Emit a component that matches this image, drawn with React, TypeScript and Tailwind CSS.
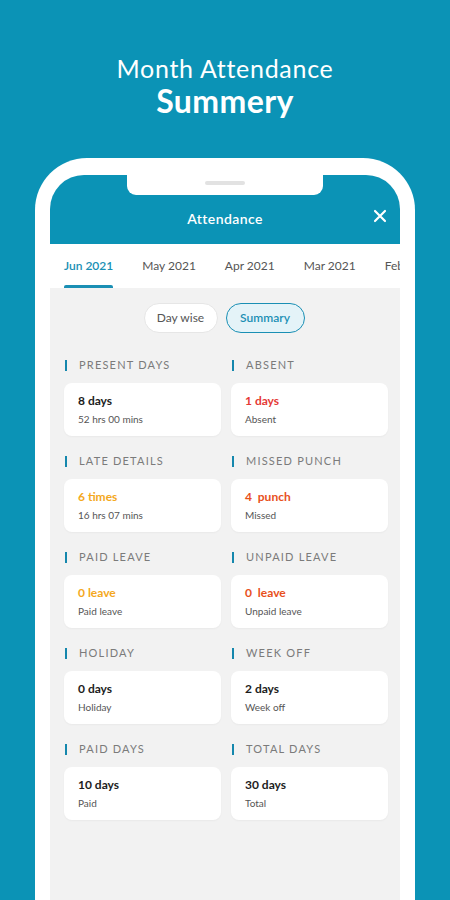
import React from "react";

const font = { fontFamily: "Lato, 'Noto Sans', sans-serif" };

type Item = {
  label: string;
  value: string;
  sub: string;
  color: string;
};

const items: Item[] = [
  { label: "PRESENT DAYS", value: "8 days", sub: "52 hrs 00 mins", color: "text-[#1c1c1c]" },
  { label: "ABSENT", value: "1 days", sub: "Absent", color: "text-[#e53935]" },
  { label: "LATE DETAILS", value: "6 times", sub: "16 hrs 07 mins", color: "text-[#f4a81d]" },
  { label: "MISSED PUNCH", value: "4  punch", sub: "Missed", color: "text-[#e8501c]" },
  { label: "PAID LEAVE", value: "0 leave", sub: "Paid leave", color: "text-[#f4a81d]" },
  { label: "UNPAID LEAVE", value: "0  leave", sub: "Unpaid leave", color: "text-[#e8501c]" },
  { label: "HOLIDAY", value: "0 days", sub: "Holiday", color: "text-[#1c1c1c]" },
  { label: "WEEK OFF", value: "2 days", sub: "Week off", color: "text-[#1c1c1c]" },
  { label: "PAID DAYS", value: "10 days", sub: "Paid", color: "text-[#1c1c1c]" },
  { label: "TOTAL DAYS", value: "30 days", sub: "Total", color: "text-[#1c1c1c]" },
];

function Cell({ item }: { item: Item }) {
  return (
    <div className="flex flex-col">
      <div className="flex h-[18px] items-center gap-[12px] pl-[1px]">
        <span className="h-[11px] w-[2px] bg-[#1587ad]" />
        <span className="text-[11px] tracking-[1.2px] text-[#7b7b7b]">{item.label}</span>
      </div>
      <div className="mt-[9px] flex h-[53px] flex-col rounded-[8px] bg-white pl-[14px] pt-[11px] shadow-[0_1px_2px_rgba(0,0,0,0.04)]">
        <span className={`text-[12px] font-bold leading-[14px] whitespace-pre ${item.color}`}>{item.value}</span>
        <span className="mt-[5px] text-[10px] leading-[13px] text-[#555]">{item.sub}</span>
      </div>
    </div>
  );
}

export default function App() {
  const tabs = ["Jun 2021", "May 2021", "Apr 2021", "Mar 2021", "Feb 2021"];
  return (
    <div className="h-[900px] w-[450px] overflow-hidden bg-[#0b93b6]" style={font}>
      <div className="flex h-[158px] flex-col items-center pt-[53px] text-white">
        <div className="text-[25px] font-normal leading-[30px] tracking-[0.7px]">Month Attendance</div>
        <div className="text-[32px] font-bold leading-[36px] tracking-[0.4px]">Summery</div>
      </div>

      <div className="ml-[35px] h-[760px] w-[380px] rounded-t-[52px] bg-white pl-[15px] pr-[15px] pt-[17px]">
        <div className="relative h-full overflow-hidden rounded-t-[34px] bg-[#f2f2f2]">
          {/* notch */}
          <div className="absolute left-[77px] top-0 flex h-[20px] w-[196px] justify-center rounded-b-[9px] bg-white">
            <span className="mt-[6px] h-[4px] w-[40px] rounded-full bg-[#e2e2e2]" />
          </div>

          {/* header */}
          <div className="flex h-[69px] items-end bg-[#0b93b6]">
            <div className="relative flex h-[48px] w-full items-center justify-center pb-[4px]">
              <span className="text-[14px] font-semibold tracking-[0.4px] text-white">Attendance</span>
              <svg
                className="absolute right-[13px] top-[13px]"
                width="14"
                height="14"
                viewBox="0 0 14 14"
                fill="none"
                stroke="white"
                strokeWidth="2.2"
                strokeLinecap="round"
              >
                <path d="M2 2 L12 12 M12 2 L2 12" />
              </svg>
            </div>
          </div>

          {/* tabs */}
          <div className="flex h-[44px] gap-[29px] overflow-hidden whitespace-nowrap bg-white pl-[14px]">
            {tabs.map((t, i) => (
              <div key={t} className="relative flex h-full shrink-0 items-center">
                <span className={`text-[12px] ${i === 0 ? "font-semibold text-[#1a8fb4]" : "text-[#555]"}`}>{t}</span>
                {i === 0 && (
                  <span className="absolute bottom-0 left-0 h-[3px] w-full rounded-t-[2px] bg-[#1a8fb4]" />
                )}
              </div>
            ))}
          </div>

          {/* content */}
          <div className="pl-[14px] pr-[12px] pt-[15px]">
            <div className="flex justify-center gap-[8px] pr-[4px]">
              <div className="flex h-[30px] w-[74px] items-center justify-center rounded-full border border-[#e6e6e6] bg-white text-[12px] text-[#555]">
                Day wise
              </div>
              <div className="flex h-[30px] w-[79px] items-center justify-center rounded-full border border-[#1a8fb4] bg-[#e4f3f8] text-[12px] font-semibold text-[#1a8fb4]">
                Summary
              </div>
            </div>

            <div className="mt-[23px] grid grid-cols-2 gap-x-[10px] gap-y-[16px]">
              {items.map((it) => (
                <Cell key={it.label} item={it} />
              ))}
            </div>
          </div>
        </div>
      </div>
    </div>
  );
}
